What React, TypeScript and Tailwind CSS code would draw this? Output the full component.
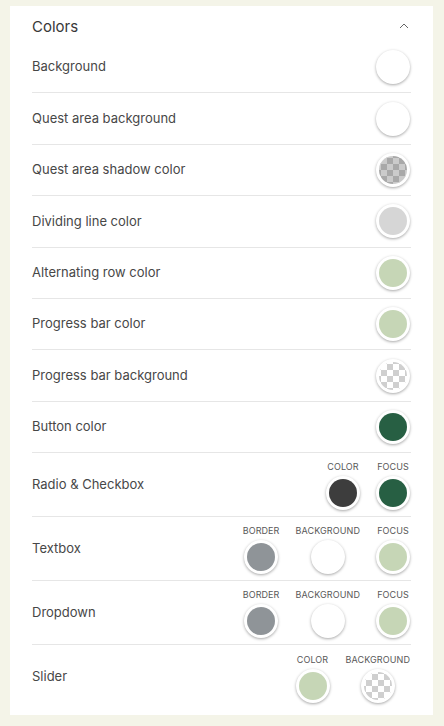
import React from "react";

type Sw = { color?: string; checker?: "dark" | "light" };

const checkerDark =
  "bg-[conic-gradient(#a9a9a9_25%,#cbcbcb_0_50%,#a9a9a9_0_75%,#cbcbcb_0)] bg-[length:12px_12px] bg-[position:2px_2px]";
const checkerLight =
  "bg-[conic-gradient(#cfcfcf_25%,#ffffff_0_50%,#cfcfcf_0_75%,#ffffff_0)] bg-[length:12px_12px] bg-[position:2px_2px]";

function Swatch({ color, checker }: Sw) {
  const cls = checker === "dark" ? checkerDark : checker === "light" ? checkerLight : "";
  return (
    <div className="w-[34px] h-[34px] rounded-full bg-white p-[3px] shadow-[0_1px_3px_rgba(0,0,0,0.35)] shrink-0">
      <div
        className={`w-full h-full rounded-full ${cls}`}
        style={color ? { backgroundColor: color } : undefined}
      />
    </div>
  );
}

const simple: { label: string; sw: Sw }[] = [
  { label: "Background", sw: { color: "#ffffff" } },
  { label: "Quest area background", sw: { color: "#ffffff" } },
  { label: "Quest area shadow color", sw: { checker: "dark" } },
  { label: "Dividing line color", sw: { color: "#d6d6d6" } },
  { label: "Alternating row color", sw: { color: "#c6d6b6" } },
  { label: "Progress bar color", sw: { color: "#c6d6b6" } },
  { label: "Progress bar background", sw: { checker: "light" } },
  { label: "Button color", sw: { color: "#275f43" } },
];

const multi: { label: string; items: { name: string; sw: Sw }[] }[] = [
  {
    label: "Radio & Checkbox",
    items: [
      { name: "COLOR", sw: { color: "#3d3d3d" } },
      { name: "FOCUS", sw: { color: "#275f43" } },
    ],
  },
  {
    label: "Textbox",
    items: [
      { name: "BORDER", sw: { color: "#8f9498" } },
      { name: "BACKGROUND", sw: { color: "#ffffff" } },
      { name: "FOCUS", sw: { color: "#c6d6b6" } },
    ],
  },
  {
    label: "Dropdown",
    items: [
      { name: "BORDER", sw: { color: "#8f9498" } },
      { name: "BACKGROUND", sw: { color: "#ffffff" } },
      { name: "FOCUS", sw: { color: "#c6d6b6" } },
    ],
  },
  {
    label: "Slider",
    items: [
      { name: "COLOR", sw: { color: "#c6d6b6" } },
      { name: "BACKGROUND", sw: { checker: "light" } },
    ],
  },
];

export default function App() {
  return (
    <div className="w-[444px] h-[726px] bg-[#f4f4e8] pt-[6px] pl-[10px] overflow-hidden font-['Inter','Noto_Sans',sans-serif] text-[#474747]">
      <div className="w-[423px] bg-white px-[22px] pb-[6px]">
        <div className="flex items-center justify-between pt-[10px] pb-[4px]">
          <span className="text-[15px] leading-[22px] text-[#383838]">Colors</span>
          <svg width="10" height="6" viewBox="0 0 10 6" className="mr-[2px] -mt-[3px]">
            <path d="M1 5 L5 1 L9 5" fill="none" stroke="#666" strokeWidth="1" />
          </svg>
        </div>
        {simple.map((r) => (
          <div
            key={r.label}
            className="flex items-center justify-between h-[51.4px] border-b border-[#e6e6e6] pr-[1px]"
          >
            <span className="text-[13px]">{r.label}</span>
            <Swatch {...r.sw} />
          </div>
        ))}
        {multi.map((r, i) => (
          <div
            key={r.label}
            className={`flex items-center justify-between h-[64px] pr-[1px] ${
              i < multi.length - 1 ? "border-b border-[#e6e6e6]" : ""
            }`}
          >
            <span className="text-[13px]">{r.label}</span>
            <div className="flex gap-4 pt-[2px]">
              {r.items.map((it) => (
                <div key={it.name} className="flex flex-col items-center gap-[3px]">
                  <span className="text-[9px] leading-[12px] text-[#585858] tracking-[0.1px]">
                    {it.name}
                  </span>
                  <Swatch {...it.sw} />
                </div>
              ))}
            </div>
          </div>
        ))}
      </div>
    </div>
  );
}
